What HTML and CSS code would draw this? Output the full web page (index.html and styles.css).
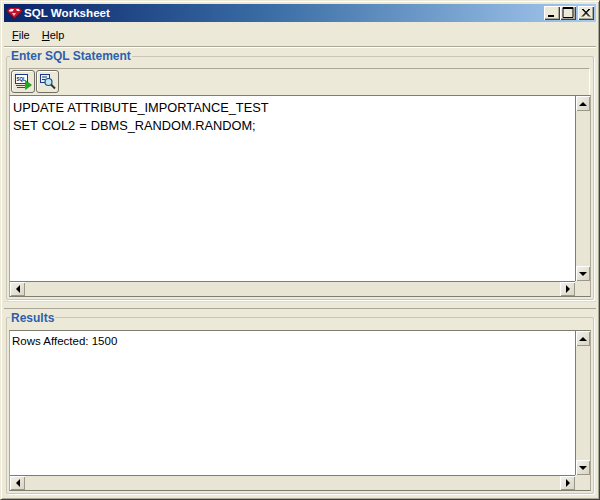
FILE: index.html
```html
<!DOCTYPE html>
<html lang="en">
<head>
<meta charset="utf-8">
<title>SQL Worksheet</title>
<link rel="stylesheet" href="styles.css">
</head>
<body>
<div class="window">
  <header class="titlebar">
    <svg class="app-icon" width="17" height="12" viewBox="0 0 17 12"><path d="M.5 4 4 .5h9L16.500 4 8.500 11.500z" fill="#c8102e" stroke="#5c0a18" stroke-width=".8"/><path d="M3 3.500 5 2h3L6.500 4.500H3.500zM10 2h2.500l1.500 2h-3z" fill="#fff"/><path d="M6 6h4L8 9z" fill="#f7c4cb"/></svg>
    <span class="title">SQL Worksheet</span>
    <div class="winbtns">
      <span class="winbtn"><svg width="16" height="14" viewBox="0 0 16 14"><rect x="4" y="9" width="6" height="2" fill="#000"/></svg></span>
      <span class="winbtn"><svg width="16" height="14" viewBox="0 0 16 14"><path d="M3 1.500h10v10H3zM3 2.500h10" fill="none" stroke="#000"/></svg></span>
      <span class="winbtn close"><svg width="16" height="14" viewBox="0 0 16 14"><path d="M4 3l7 7.500M5 3l7 7.500M11 3l-7 7.500M12 3l-7 7.500" fill="none" stroke="#000"/></svg></span>
    </div>
  </header>
  <nav class="menubar"><span class="menu"><u>F</u>ile</span><span class="menu"><u>H</u>elp</span></nav>
  <section class="group top-group">
    <h2 class="legend">Enter SQL Statement</h2>
    <div class="toolbar">
      <button class="tool tool-run">
        <svg width="17" height="16" viewBox="0 0 17 16"><rect x=".5" y=".5" width="12" height="9" fill="#fff" stroke="#1a3a8c"/><text x="1.500" y="7" class="sql">SQL</text><path d="M1 11.500h9M2 13.500h8" stroke="#2a4a9c"/><path d="M10.500 6.500l6 4.500-6 4.500z" fill="#19b019" stroke="#0d6a0d" stroke-width=".5"/></svg>
      </button>
      <button class="tool">
        <svg width="16" height="16" viewBox="0 0 16 16"><rect x=".5" y=".5" width="9" height="8" fill="#e8eefa" stroke="#1a3a8c"/><path d="M2 3h5M2 5.500h3" stroke="#1a3a8c"/><circle cx="8.500" cy="8" r="3.500" fill="#bfe6f4" stroke="#22507a" stroke-width="1.200"/><path d="M11 10.500l4 4" stroke="#333" stroke-width="2"/></svg>
      </button>
    </div>
    <div class="scrollpane sql-pane">
      <div class="content sql-text">UPDATE ATTRIBUTE_IMPORTANCE_TEST<br>SET COL2 = DBMS_RANDOM.RANDOM;</div>
      <div class="vbar"><span class="arrow"><i class="tri up"></i></span><span class="arrow"><i class="tri down"></i></span></div>
      <div class="hbar"><span class="arrow"><i class="tri left"></i></span><span class="arrow"><i class="tri right"></i></span></div>
      <div class="corner"></div>
    </div>
  </section>
  <div class="divider"></div>
  <section class="group bottom-group">
    <h2 class="legend">Results</h2>
    <div class="scrollpane result-pane">
      <div class="content result-text">Rows Affected: 1500</div>
      <div class="vbar"><span class="arrow"><i class="tri up"></i></span><span class="arrow"><i class="tri down"></i></span></div>
      <div class="hbar"><span class="arrow"><i class="tri left"></i></span><span class="arrow"><i class="tri right"></i></span></div>
      <div class="corner"></div>
    </div>
  </section>
</div>
</body>
</html>
```
FILE: styles.css
```css
* { box-sizing: border-box; }
html, body { margin: 0; padding: 0; }
body { width: 600px; height: 500px; overflow: hidden; font-family: "Liberation Sans", Arial, sans-serif; }
.window {
  width: 600px; height: 500px; background: #ece9d8; color: #000;
  border: 1px solid; border-color: #ece9d8 #404040 #404040 #ece9d8;
  box-shadow: inset 1px 1px 0 #fff, inset -1px -1px 0 #aca899;
  padding: 3px;
  display: flex; flex-direction: column;
}
.titlebar {
  height: 18px; flex: none; display: flex; align-items: center; padding: 0 2px 0 1px;
  background: linear-gradient(90deg, #0a246a 0%, #3a6ea5 45%, #a6caf0 100%);
  color: #fff;
}
.app-icon { flex: none; margin-right: 1px; margin-left: 1px; }
.title { font-weight: 700; font-size: 11.600px; flex: 1; padding-bottom: 2px; }
.winbtns { display: flex; }
.winbtn {
  width: 16px; height: 14px; background: #ece9d8; display: block;
  box-shadow: inset 1px 1px 0 #fff, inset -1px -1px 0 #404040, inset -2px -2px 0 #aca899;
}
.winbtn svg { display: block; }
.close { margin-left: 2px; }
.menubar {
  height: 25px; flex: none; display: flex; align-items: center; padding: 2px 5px 0 4px; gap: 4px;
  font-size: 11px; border-bottom: 1px solid #aca899; box-shadow: 0 1px 0 #fff;
}
.menu { padding: 0 4px; }
.group {
  position: relative; flex: none; border: 1px solid #c9c6b5; border-radius: 2px; box-shadow: 1px 1px 0 #fff;
  margin: 0 2px; padding: 0 2px; display: flex; flex-direction: column;
}
.top-group { margin-top: 9px; height: 244px; padding-top: 11px; padding-bottom: 2px; }
.bottom-group { margin-top: 8px; height: 177px; padding-top: 12px; padding-bottom: 2px; }
.legend {
  position: absolute; left: 3px; top: -8px; margin: 0; padding: 0 1px; background: #ece9d8;
  font-size: 12px; line-height: 14px; font-weight: 700; color: #2e5fae;
}
.bottom-group .legend { top: -7px; }
.divider {
  flex: none; height: 8px; margin-top: 1px;
  border-top: 1px solid #dedbca; border-bottom: 1px solid #aca899;
}
.toolbar {
  height: 27px; flex: none; display: flex; align-items: center; gap: 1px; padding: 0 1px 1px;
  border: 1px solid #aca899; border-bottom: 0; border-right-color: #fff; margin-right: 1px;
}
.tool {
  width: 23px; height: 23px; padding: 0; background: #ece9d8; display: flex; align-items: center; justify-content: center;
  border: 1px solid #716f64; border-radius: 3px; box-shadow: inset 1px 1px 0 #fff;
}
.tool-run { width: 24px; }
.sql { font: 700 4.500px "Liberation Sans", sans-serif; fill: #0a246a; }
.scrollpane {
  flex: 1; min-height: 0; display: grid; grid-template-columns: 1fr 15px; grid-template-rows: 1fr 15px;
  border: 1px solid; border-color: #7f7d70 #aca899 #7f7d70 #aca899; background: #fff;
}
.content { background: #fff; min-width: 0; overflow: hidden; }
.sql-text { font-size: 12.800px; line-height: 18px; padding: 3px 3px; word-spacing: .5px; }
.result-text { font-size: 11.500px; line-height: 13px; padding: 4px 2px; }
.vbar {
  display: flex; flex-direction: column; justify-content: space-between;
  background: #e8e5d5; border-left: 1px solid #7f7d70;
}
.hbar {
  display: flex; justify-content: space-between;
  background: #e8e5d5; border-top: 1px solid #7f7d70;
}
.corner { background: #e8e5d5; }
.arrow {
  width: 15px; height: 15px; flex: none; display: flex; align-items: center; justify-content: center;
  background: linear-gradient(135deg, #f4f2e8, #d8d4c4);
  box-shadow: inset 1px 1px 0 #fff, inset -1px -1px 0 #9a9888;
}
.vbar .arrow { width: 14px; }
.hbar .arrow { height: 14px; }
.tri { display: block; width: 0; height: 0; border-style: solid; border-color: transparent; }
.tri.up { border-width: 0 4.500px 4.500px; border-bottom-color: #000; }
.tri.down { border-width: 4.500px 4.500px 0; border-top-color: #000; }
.tri.left { border-width: 4.500px 4.500px 4.500px 0; border-right-color: #000; }
.tri.right { border-width: 4.500px 0 4.500px 4.500px; border-left-color: #000; }
```
